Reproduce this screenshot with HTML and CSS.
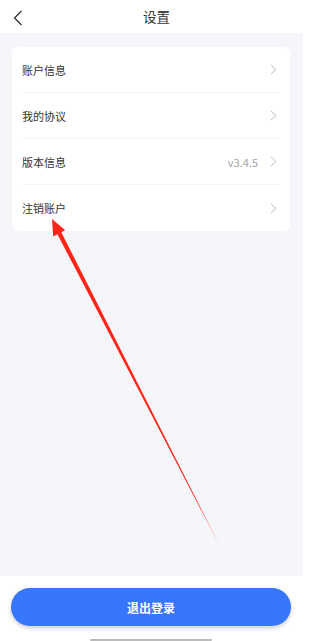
FILE: index.html
```html
<!DOCTYPE html>
<html lang="zh-CN">
<head>
    <meta charset="UTF-8">
    <meta name="viewport" content="width=device-width, initial-scale=1.0">
    <title>设置</title>
    <link rel="stylesheet" href="styles.css">
</head>
<body>
<div class="page">
    <div class="main">
        <div class="header">
            <span class="back">
                <svg width="10" height="16" viewBox="0 0 10 16"><path d="M8.5 1 L1.5 8 L8.5 15" fill="none" stroke="#333" stroke-width="1.3"/></svg>
            </span>
            <span class="title">设置</span>
        </div>
        <div class="content">
            <div class="card">
                <div class="row">
                    <span class="label">账户信息</span>
                    <span class="chevron"><svg width="7" height="11" viewBox="0 0 7 11"><path d="M1 1 L6 5.5 L1 10" fill="none" stroke="#bbb" stroke-width="1"/></svg></span>
                </div>
                <div class="row">
                    <span class="label">我的协议</span>
                    <span class="chevron"><svg width="7" height="11" viewBox="0 0 7 11"><path d="M1 1 L6 5.5 L1 10" fill="none" stroke="#bbb" stroke-width="1"/></svg></span>
                </div>
                <div class="row">
                    <span class="label">版本信息</span>
                    <span class="value">v3.4.5</span>
                    <span class="chevron"><svg width="7" height="11" viewBox="0 0 7 11"><path d="M1 1 L6 5.5 L1 10" fill="none" stroke="#bbb" stroke-width="1"/></svg></span>
                </div>
                <div class="row">
                    <span class="label">注销账户</span>
                    <span class="chevron"><svg width="7" height="11" viewBox="0 0 7 11"><path d="M1 1 L6 5.5 L1 10" fill="none" stroke="#bbb" stroke-width="1"/></svg></span>
                </div>
            </div>
        </div>
    </div>
    <div class="footer">
        <button class="logout">退出登录</button>
        <div class="home-bar"></div>
    </div>

    <svg class="arrow" width="314" height="641" viewBox="0 0 314 641">
        <defs>
            <linearGradient id="fade" gradientUnits="userSpaceOnUse" x1="52" y1="219" x2="225" y2="556">
                <stop offset="0" stop-color="#ff2318"/>
                <stop offset="0.85" stop-color="#ff2318"/>
                <stop offset="1" stop-color="#ff2318" stop-opacity="0.1"/>
            </linearGradient>
        </defs>
        <polygon points="52,219 53.2,236.5 57.4,234.2 225,556 61.3,232.2 65.2,230.2" fill="url(#fade)"/>
    </svg>
</div>
</body>
</html>
```

FILE: styles.css
```css
* {
    box-sizing: border-box;
}

body {
    margin: 0;
    font-family: "Noto Sans CJK SC", "Noto Sans", sans-serif;
    background-color: #fff;
}

.page {
    position: relative;
    width: 314px;
    height: 641px;
    display: flex;
    flex-direction: column;
    overflow: hidden;
}

.main {
    width: 303px;
    height: 576px;
    display: flex;
    flex-direction: column;
}

.header {
    height: 33px;
    background-color: #fff;
    display: flex;
    align-items: center;
    justify-content: center;
    position: relative;
}

.back {
    position: absolute;
    left: 13px;
    top: 10px;
    display: flex;
}

.title {
    font-size: 13.5px;
    color: #333;
    margin-left: 10px;
    margin-top: -2px;
}

.content {
    flex: 1;
    background-color: #f5f6fa;
    padding: 14px 13px 0 12px;
}

.card {
    background-color: #fff;
    border-radius: 6px;
    padding: 0 10px;
}

.row {
    height: 46px;
    display: flex;
    align-items: center;
    border-bottom: 1px solid #f3f3f5;
}

.row:last-child {
    border-bottom: none;
}

.label {
    flex: 1;
    font-size: 11px;
    color: #333;
}

.value {
    font-size: 11px;
    color: #a3a3a3;
    margin-right: 12px;
}

.chevron {
    display: flex;
    margin-right: 3px;
}

.footer {
    flex: 1;
    display: flex;
    flex-direction: column;
    align-items: flex-start;
    padding-top: 12px;
    padding-left: 11px;
}

.logout {
    width: 280px;
    height: 38px;
    border: none;
    border-radius: 19px;
    background-color: #3777fb;
    color: #fff;
    font-family: inherit;
    font-size: 12px;
    font-weight: bold;
    box-shadow: 0 2px 4px rgba(0, 0, 0, 0.2);
}

.home-bar {
    width: 122px;
    height: 2px;
    margin-top: 13px;
    margin-left: 79px;
    background-color: #bbb;
    border-radius: 1px;
}

.arrow {
    position: absolute;
    left: 0;
    top: 0;
    pointer-events: none;
}
```
